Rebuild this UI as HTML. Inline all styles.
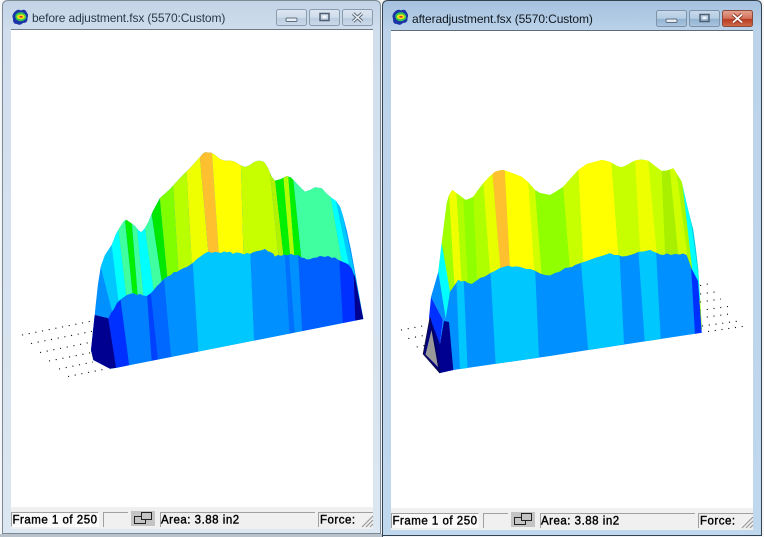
<!DOCTYPE html>
<html><head><meta charset="utf-8"><style>
html,body{margin:0;padding:0;background:#fff}
svg{display:block}
text{font-family:"Liberation Sans",sans-serif}
.t{font-size:12px;fill:#2a3a48}
.s{font-size:11.5px;fill:#000;letter-spacing:.5px;stroke:#000;stroke-width:.4px}
.d{stroke:#111;stroke-width:1.1;stroke-dasharray:1.1 5.7;fill:none}
</style></head><body>
<svg width="764" height="537" viewBox="0 0 764 537" xmlns="http://www.w3.org/2000/svg" style="width:764px;height:537px">
<defs>
<linearGradient id="ga" x1="0" y1="0" x2="0" y2="1"><stop offset="0" stop-color="#c3d3e6"/><stop offset=".06" stop-color="#d0deed"/><stop offset="1" stop-color="#dbe7f2"/></linearGradient>
<linearGradient id="gb" x1="0" y1="0" x2="0" y2="1"><stop offset="0" stop-color="#a5c1de"/><stop offset=".06" stop-color="#bcd3ea"/><stop offset="1" stop-color="#c0d8ee"/></linearGradient>
<linearGradient id="btn" x1="0" y1="0" x2="0" y2="1"><stop offset="0" stop-color="#dce6f1"/><stop offset=".5" stop-color="#cfdcea"/><stop offset=".55" stop-color="#bccde0"/><stop offset="1" stop-color="#cbdaea"/></linearGradient>
<linearGradient id="btn2" x1="0" y1="0" x2="0" y2="1"><stop offset="0" stop-color="#c9daec"/><stop offset=".5" stop-color="#b4cce3"/><stop offset=".55" stop-color="#93b3d2"/><stop offset="1" stop-color="#a9c6e0"/></linearGradient>
<linearGradient id="cl" x1="0" y1="0" x2="0" y2="1"><stop offset="0" stop-color="#e5a592"/><stop offset=".5" stop-color="#d2705a"/><stop offset=".55" stop-color="#b83c22"/><stop offset="1" stop-color="#cf6b4c"/></linearGradient>
<clipPath id="lu"><polygon points="91,352 94.7,315 95.7,305 98,284 100.7,267 105,255 111.7,245 116,234 120,227 124,221 126.7,220 131,223 135,226 139,231 141.7,232 145,228 148.3,222 153,211 160,198 170,189 180,178 190,168 200,157 203,153.5 205,152.3 211.7,152.7 215,155 220,159 225,160.7 230,160.5 235,161.7 240,165 245,167 250,165 254,162 258,160.7 262,161 265,163 268,168 271.7,176.7 275,180.7 281,179 286.7,176 291,177.5 295,181.7 300,187 305,191.7 310,190 315,187.3 321.7,188.3 326,193 331.7,198 336,201 340,206.7 343,216 346.7,230 351,250 355,271.7 363.3,319 300,330 100,340"/></clipPath>
<clipPath id="ll"><polygon points="94.7,315 108.3,318.3 111,313 114,309 117,303 120,300 124,297 127,295 130,294 133.3,293.3 137,295 140,294 143,295.5 146.7,296 150,294 153,291 157,286 160,283.3 164,279 167.3,276.7 171,275 174,272 177,272 180,270 184,268 187,267 190,265 194,262 197,259 200,257 204,254 208.3,251.7 212,253 215,252 218,252.5 221,253 224,251.5 227,252.5 230,251.7 233,254 236,252.5 240,253 244,254.5 247,253 250,254 254,252 258,251 261,250.5 265,249 268,251.5 270,252 273,253.5 275,256.7 278,255 281,256 284,254.5 287,255.5 291,254 295,255.5 298.3,255 301,257.5 304,258 307,259.5 310,259.3 313,258 317,257.5 320,256 325,257 328,256 332,258 335,257.5 338.3,260 343,262 350,265 355,276.7 363.3,319 116.7,367.7 110,368.7 93.3,360 91,350"/></clipPath>
<clipPath id="ru"><polygon points="441.7,243 444,224 446.7,203 449,195 452.3,190 459,195 465.7,200 470,198.5 473.3,196.7 478,190 483.3,183.3 489,177 495,171.7 499,170.5 503.3,170 512,173 521.7,176.7 528,182 535,190 540,193 545,194 550,195 556,191.5 563.3,186.7 571,178 578.3,170 586.7,164 594,162 601.7,160 607,161 611.7,162.7 617,166 621.7,167.3 627,165 632,162 636.7,160 642,159.5 648.3,160.7 655,166 661.7,171 667,170.5 673.3,168.3 677,174 681.7,181.7 687,205 693.3,230 696,250 698.3,270 702,330 600,290 450,295 445.7,318 438.3,271.7"/></clipPath>
<clipPath id="rl"><polygon points="450,291.7 454,286 458.3,280 461,281.5 465,281 468,283 471.7,284 476,281 480,278 485,276.5 490,273.3 495,271 500,268 504,267 508.3,265.7 512,267 516,266.5 520,267 526,269 530,269 535,270.7 540,273.5 545,275 550,275.5 555,273 560,271.5 565,268 572,267 575,265 580,263.3 587,261 595,258 602,256 610,253.3 614,255 618,255 622,256.5 626.7,256 632,254.5 635,253.5 638,252 644,251.5 650,250 654,252 657,253 660,254.5 663.3,255 667,253.5 671,255 675,254 680,254.5 683,253.5 686.7,255 691.7,269 698,281 701.7,332.7 588.3,350 550,356 453.3,370 440,373"/></clipPath>
</defs>

<rect width="764" height="537" fill="#f4f6f8"/>

<!-- left window frame -->
<path d="M2.5,537V6Q2.5,.5 8,.5H375Q380.5,.5 380.5,6V533.5H2.5" fill="url(#ga)" stroke="#7d8a96"/>
<rect x="0" y="534" width="382" height="3" fill="#b9c2ca"/>
<rect x="11" y="29" width="362" height="1" fill="#6f7a85"/>
<rect x="11" y="30" width="362" height="477" fill="#fff"/>
<rect x="11" y="507" width="362" height="22" fill="#f0f0f0"/>

<!-- left title -->
<g transform="translate(12,9)">
<path d="M2.5,3Q6,-.5 9,1.5Q13,-.5 14.5,3Q17,6 15.5,9Q16,14 11,14Q8,17 5,15Q.5,15 1,10Q-.5,6 2.5,3Z" fill="#1b35a8"/>
<path d="M3.5,6Q6,2.5 11,3.5Q15,6 14,9.5Q11,13 7,12Q2.5,10.5 3.5,6Z" fill="#38c850"/>
<ellipse cx="8.8" cy="7.8" rx="4" ry="2.4" fill="#f3e21a"/>
<rect x="7.5" y="7" width="3" height="1.6" fill="#d8392a"/>
</g>
<text x="32" y="22" class="t" letter-spacing="-.12">before adjustment.fsx (5570:Custom)</text>
<g stroke="#8b9cb0" fill="url(#btn)">
<rect x="276.5" y="9.5" width="30" height="16" rx="2"/>
<rect x="309.5" y="9.5" width="30" height="16" rx="2"/>
<rect x="342.5" y="9.5" width="30" height="16" rx="2"/>
</g>
<rect x="286" y="18" width="11" height="3.5" rx="1" fill="#e6edf5" stroke="#5f6e80"/>
<rect x="320" y="13.5" width="9" height="7" fill="none" stroke="#4f5e70" stroke-width="1.5"/>
<rect x="322.8" y="15.6" width="3.5" height="2.6" fill="#f2f5f9"/>
<path d="M353,13.5L362,21.5M362,13.5L353,21.5" stroke="#5a6878" stroke-width="3.4"/>
<path d="M353,13.5L362,21.5M362,13.5L353,21.5" stroke="#eef2f7" stroke-width="1.5"/>

<!-- right window frame -->
<path d="M382.5,537V6Q382.5,.5 388,.5H756Q761.5,.5 761.5,6V535.5H382.5" fill="url(#gb)" stroke="#34424f"/>
<rect x="391" y="30" width="362" height="1" fill="#5f6b76"/>
<rect x="391" y="31" width="362" height="477" fill="#fff"/>
<rect x="391" y="508" width="362" height="22" fill="#f0f0f0"/>

<g transform="translate(392,9)">
<path d="M2.5,3Q6,-.5 9,1.5Q13,-.5 14.5,3Q17,6 15.5,9Q16,14 11,14Q8,17 5,15Q.5,15 1,10Q-.5,6 2.5,3Z" fill="#1b35a8"/>
<path d="M3.5,6Q6,2.5 11,3.5Q15,6 14,9.5Q11,13 7,12Q2.5,10.5 3.5,6Z" fill="#38c850"/>
<ellipse cx="8.8" cy="7.8" rx="4" ry="2.4" fill="#f3e21a"/>
<rect x="7.5" y="7" width="3" height="1.6" fill="#d8392a"/>
</g>
<text x="412" y="23" class="t" style="fill:#10181f" letter-spacing="-.1">afteradjustment.fsx (5570:Custom)</text>
<g stroke="#7e93aa" fill="url(#btn2)">
<rect x="656.5" y="10.5" width="30" height="16" rx="2"/>
<rect x="689.5" y="10.5" width="30" height="16" rx="2"/>
</g>
<rect x="722.5" y="10.5" width="30" height="16" rx="2" fill="url(#cl)" stroke="#8a4a3c"/>
<rect x="666" y="19" width="11" height="3.5" rx="1" fill="#e6edf5" stroke="#5f6e80"/>
<rect x="700" y="14.5" width="9" height="7" fill="none" stroke="#4f5e70" stroke-width="1.5"/>
<rect x="702.8" y="16.6" width="3.5" height="2.6" fill="#f2f5f9"/>
<path d="M733,14.5L742,22.5M742,14.5L733,22.5" stroke="#8d3a28" stroke-width="3.6"/>
<path d="M733,14.5L742,22.5M742,14.5L733,22.5" stroke="#fff" stroke-width="1.8"/>

<!-- left dots -->
<g class="d">
<path d="M22,335L92,321"/>
<path d="M31,343.5L94,331"/>
<path d="M40,352.5L92,342"/>
<path d="M49,361L92,352.5"/>
<path d="M59,369L93,362"/>
<path d="M68,376.5L103,369.5"/>
</g>
<!-- right dots -->
<g class="d">
<path d="M401,330L425,325.5"/>
<path d="M408.3,338.5L426,335"/>
<path d="M416.7,347L425,345.5"/>
<path d="M700,285.5L708,284"/>
<path d="M700,294L715,292"/>
<path d="M700,302L721,299"/>
<path d="M700,310.5L728,306.5"/>
<path d="M700,318L733,313.5"/>
<path d="M702,326L739,321"/>
<path d="M708,331.5L746,326"/>
</g>

<!-- left plot upper -->
<g clip-path="url(#lu)">
<rect x="80" y="140" width="300" height="230" fill="#0090ff"/>
<polygon points="71,150 100.2,150 120.7,320 114.3,320" fill="#00c8ff"/>
<polygon points="100.2,150 109,150 129,320 120.7,320" fill="#00ffff"/>
<polygon points="109,150 117.7,150 135.3,320 129,320" fill="#40ffa0"/>
<polygon points="117.7,150 126,150 139.7,320 135.3,320" fill="#00f000"/>
<polygon points="126,150 130,150 145.7,320 139.7,320" fill="#40ffa0"/>
<polygon points="130,150 134,150 157.7,320 145.7,320" fill="#00ffff"/>
<polygon points="134,150 142,150 167.5,320 157.7,320" fill="#40ffa0"/>
<polygon points="142,150 155.3,150 171.3,320 167.5,320" fill="#00e800"/>
<polygon points="155.3,150 171,150 181.3,320 171.3,320" fill="#80ff00"/>
<polygon points="171,150 185.3,150 195,320 181.3,320" fill="#b8ff00"/>
<polygon points="185.3,150 199.3,150 214.3,320 195,320" fill="#f0ff00"/>
<polygon points="199.3,150 211.7,150 223.3,320 214.3,320" fill="#ffc030"/>
<polygon points="211.7,150 240.5,150 245.3,320 223.3,320" fill="#ffff00"/>
<polygon points="240.5,150 267.7,150 285,320 245.3,320" fill="#c8ff00"/>
<polygon points="267.7,150 271.7,150 290.7,320 285,320" fill="#b0f400"/>
<polygon points="271.7,150 281,150 295.7,320 290.7,320" fill="#00f000"/>
<polygon points="281,150 286.3,150 299.3,320 295.7,320" fill="#b0ff00"/>
<polygon points="286.3,150 290.3,150 307.7,320 299.3,320" fill="#00f000"/>
<polygon points="290.3,150 322.7,150 352,320 307.7,320" fill="#40ffa0"/>
<polygon points="322.7,150 325.7,150 360.3,320 352,320" fill="#00ffff"/>
<polygon points="325.7,150 329.3,150 364.3,320 360.3,320" fill="#00c8ff"/>
</g>
<!-- left plot lower -->
<g clip-path="url(#ll)">
<rect x="80" y="240" width="300" height="140" fill="#0090ff"/>
<polygon points="90,310 108.3,318.3 116.7,368 110,375 90,365" fill="#000090"/>
<polygon points="108.3,318.3 120,295 130,365 116.7,372" fill="#0030ff"/>
<polygon points="120,295 146.7,290 151.7,362 130,372" fill="#0080ff"/>
<polygon points="146.7,290 150.7,290 158.3,362 151.7,362" fill="#0040ff"/>
<polygon points="150.7,290 163.3,270 171.7,362 158.3,362" fill="#0068ff"/>
<polygon points="163.3,270 191.7,260 199,362 171.7,362" fill="#0090ff"/>
<polygon points="191.7,245 250,245 254.3,345 199,362" fill="#00c8ff"/>
<polygon points="250,245 284.3,245 289.5,335 254.3,345" fill="#0090ff"/>
<polygon points="284.3,245 288.3,245 295,335 289.5,335" fill="#0070ff"/>
<polygon points="288.3,245 297.7,245 302.3,335 295,335" fill="#0090ff"/>
<polygon points="297.7,245 339,245 343.3,325 302.3,335" fill="#0060ff"/>
<polygon points="339,255 353,270 356,325 343.3,330" fill="#0030ff"/>
<polygon points="353,262 358,262 366,325 355.5,325" fill="#000090"/>
</g>

<!-- right plot upper -->
<g clip-path="url(#ru)">
<rect x="420" y="150" width="300" height="230" fill="#a0ff00"/>
<polygon points="447,160 454.7,160 462.7,300 455.3,300" fill="#f0ff00"/>
<polygon points="454.7,160 461.3,160 468.7,300 462.7,300" fill="#b0ff00"/>
<polygon points="461.3,160 471.7,160 478.3,300 468.7,300" fill="#90ff00"/>
<polygon points="471.7,160 481.7,160 492,300 478.3,300" fill="#b0ff00"/>
<polygon points="481.7,160 491.3,160 503,300 492,300" fill="#e8ff00"/>
<polygon points="491.3,160 504.3,160 511.7,300 503,300" fill="#ffc030"/>
<polygon points="504.3,160 527,160 536.3,300 511.7,300" fill="#ffff00"/>
<polygon points="527,160 532.7,160 543.7,300 536.3,300" fill="#d0ff00"/>
<polygon points="532.7,160 561,160 572.5,300 543.7,300" fill="#90ff00"/>
<polygon points="561,160 577.8,160 585.3,300 572.5,300" fill="#c8ff00"/>
<polygon points="577.8,160 611.3,160 621.7,300 585.3,300" fill="#ffff00"/>
<polygon points="611.3,160 635,160 642.7,300 621.7,300" fill="#c8ff00"/>
<polygon points="635,160 648.3,160 661.2,300 642.7,300" fill="#eeff00"/>
<polygon points="648.3,160 661.3,160 667,300 661.2,300" fill="#c8ff00"/>
<polygon points="661.3,160 669,160 682.7,300 667,300" fill="#a8f000"/>
<polygon points="669,160 675,160 693.3,300 682.7,300" fill="#d0ff00"/>
<polygon points="675,160 679.7,160 695.7,300 693.3,300" fill="#a8f800"/>
<polygon points="679.7,160 682,160 702,300 695.7,300" fill="#00ffff"/>
<polygon points="682,160 720,160 720,300 702,300" fill="#00c8ff"/>
</g>
<!-- right plot lower -->
<g clip-path="url(#rl)">
<rect x="430" y="240" width="300" height="140" fill="#0090ff"/>
<polygon points="456,270 463.3,270 467.7,372 460,372" fill="#00c8ff"/>
<polygon points="489.3,250 534.3,250 539,358 495.7,365" fill="#00c8ff"/>
<polygon points="580,250 619.3,250 624,344 588.3,352" fill="#00c8ff"/>
<polygon points="638.3,250 656,250 660.7,340 645,345" fill="#00c8ff"/>
<polygon points="691,265 698.3,281 704,335 695,335" fill="#0030ff"/>
</g>
<!-- left wedge of right plot -->
<polygon points="441.7,243 450,291.7 445.7,318.3 438.3,271.7" fill="#00ffff"/>
<polygon points="438.3,271.7 445.7,318.3 443,320 431,297" fill="#0090ff"/>
<polygon points="431,297 443,320 440,344 429,318" fill="#0030ff"/>
<polygon points="445.7,318.3 450,291.7 453.3,370 440,373 440,344 443,320" fill="#0090ff"/>
<polygon points="444,321 449,322 453.3,370 440,373 440,344" fill="#000090"/>
<polygon points="430,318 440,344 440,373 423.3,354" fill="#000080"/>
<polygon points="432,328 425.5,354.5 438,367" fill="#999"/>
<path d="M430,318L423.3,354L440,373" fill="none" stroke="#10104a" stroke-width="1"/>
<path d="M430,318L440,373" fill="none" stroke="#000060" stroke-width="1.4"/>

<!-- left status -->
<g>
<rect x="11.5" y="512" width="87" height="15" fill="#fafafa" stroke="none"/>
<path d="M11.5,527V512.5H98.5" fill="none" stroke="#a0a0a0"/>
<path d="M98.5,512.5V526.5H11.5" fill="none" stroke="#fff"/>
<text x="12.5" y="523.5" class="s">Frame 1 of 250</text>
<path d="M103.5,527V512.5H128" fill="none" stroke="#a0a0a0"/>
<rect x="131" y="511" width="24" height="15" fill="#c4c4c4"/>
<rect x="134.5" y="516.5" width="11" height="7" fill="none" stroke="#222"/>
<rect x="141.5" y="512.5" width="10" height="7" fill="#c4c4c4" stroke="#222"/>
<path d="M160.5,527V512.5H315" fill="none" stroke="#a0a0a0"/>
<text x="161" y="523.5" class="s">Area: 3.88 in2</text>
<path d="M318.5,527V512.5H373" fill="none" stroke="#a0a0a0"/>
<text x="320" y="523.5" class="s">Force:</text>
<path d="M362,527L373,516M366,527L373,520M370,527L373,524" stroke="#9a9a9a" stroke-width="1.2"/>
</g>

<!-- right status -->
<g>
<rect x="391.5" y="513" width="87" height="15" fill="#fafafa"/>
<path d="M391.5,528V513.5H478.5" fill="none" stroke="#a0a0a0"/>
<text x="392.5" y="524.5" class="s">Frame 1 of 250</text>
<path d="M483.5,528V513.5H508" fill="none" stroke="#a0a0a0"/>
<rect x="511" y="512" width="24" height="15" fill="#c4c4c4"/>
<rect x="514.5" y="517.5" width="11" height="7" fill="none" stroke="#222"/>
<rect x="521.5" y="513.5" width="10" height="7" fill="#c4c4c4" stroke="#222"/>
<path d="M540.5,528V513.5H695" fill="none" stroke="#a0a0a0"/>
<text x="541" y="524.5" class="s">Area: 3.88 in2</text>
<path d="M698.5,528V513.5H753" fill="none" stroke="#a0a0a0"/>
<text x="700" y="524.5" class="s">Force:</text>
<path d="M742,528L753,517M746,528L753,521M750,528L753,525" stroke="#9a9a9a" stroke-width="1.2"/>
</g>
</svg>
</body></html>
